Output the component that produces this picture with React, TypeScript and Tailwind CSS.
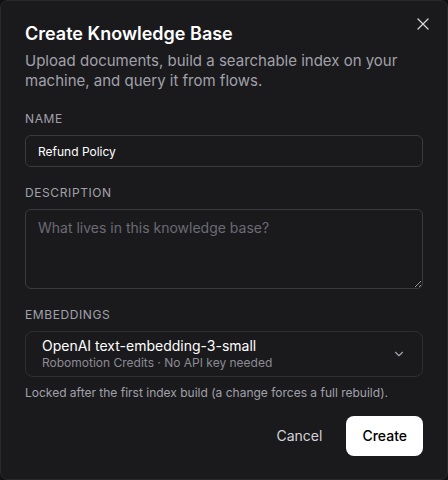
import { X, ChevronDown } from 'lucide-react';

export default function App() {
    return (
        <div className="h-[480px] w-[448px] bg-[#111113] font-['Inter',sans-serif]">
            <div className="relative flex h-full flex-col rounded-lg border border-[#2a2a2e] bg-[#1a1a1d] px-6 pt-6">
                {/* Close */}
                <button className="absolute right-[14px] top-[13px] text-[#d4d4d8]">
                    <X size={20} strokeWidth={1.5} />
                </button>

                {/* Header */}
                <h2 className="text-lg font-semibold leading-[18px] text-white">Create Knowledge Base</h2>
                <p className="mt-2 text-[15px] leading-5 text-[#a1a1aa]">
                    Upload documents, build a searchable index on your machine, and query it from flows.
                </p>

                {/* Name */}
                <label className="mt-5 text-xs uppercase tracking-wider text-[#a1a1aa]">Name</label>
                <input
                    defaultValue="Refund Policy"
                    className="mt-2 h-8 w-full rounded-md border border-[#3a3a3f] bg-transparent px-3 text-xs text-white outline-none"
                />

                {/* Description */}
                <label className="mt-[18px] text-xs uppercase tracking-wider text-[#a1a1aa]">Description</label>
                <textarea
                    placeholder="What lives in this knowledge base?"
                    className="mt-2 h-[80px] w-full resize-y rounded-md border border-[#3a3a3f] bg-transparent px-3 py-2 text-sm text-white outline-none placeholder:text-[#6b6b73]"
                />

                {/* Embeddings */}
                <label className="mt-[18px] text-xs uppercase tracking-wider text-[#a1a1aa]">Embeddings</label>
                <button className="mt-2 flex h-[46px] w-full items-center justify-between rounded-lg border border-[#2e2e33] px-4 text-left">
                    <div className="flex flex-col">
                        <span className="text-sm leading-[18px] text-white">OpenAI text-embedding-3-small</span>
                        <span className="text-xs leading-4 text-[#8b8b93]">Robomotion Credits · No API key needed</span>
                    </div>
                    <ChevronDown size={14} className="text-[#a1a1aa]" />
                </button>
                <p className="mt-2 text-xs text-[#a1a1aa]">
                    Locked after the first index build (a change forces a full rebuild).
                </p>

                {/* Footer */}
                <div className="mt-[15px] flex items-center justify-end gap-6">
                    <button className="text-sm text-[#d4d4d8]">Cancel</button>
                    <button className="h-10 rounded-lg bg-white px-4 text-sm font-medium text-black">Create</button>
                </div>
            </div>
        </div>
    );
}
